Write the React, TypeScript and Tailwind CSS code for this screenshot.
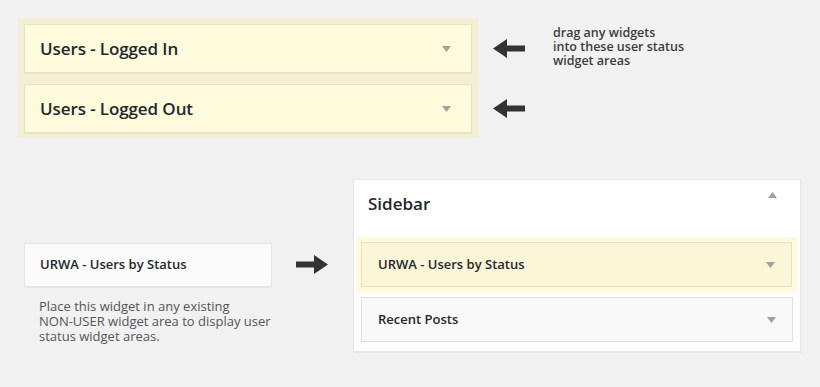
const font = { fontFamily: '"Open Sans", "Liberation Sans", sans-serif' };

function Caret({ up = false }: { up?: boolean }) {
  return (
    <svg width="9" height="6" viewBox="0 0 9 6" className="shrink-0">
      <path d={up ? 'M0 6 L4.5 0 L9 6 Z' : 'M0 0 L9 0 L4.5 6 Z'} fill="#a0a0a0" />
    </svg>
  );
}

function Arrow({ right = false }: { right?: boolean }) {
  return (
    <svg width="32" height="19" viewBox="0 0 32 19" className={right ? 'rotate-180' : ''}>
      <path d="M0 9.5 L14 0 L14 6.5 L32 6.5 L32 12.5 L14 12.5 L14 19 Z" fill="#333" />
    </svg>
  );
}

const areas = ['Users - Logged In', 'Users - Logged Out'];
const hint = ['drag any widgets', 'into these user status', 'widget areas'];
const desc = ['Place this widget in any existing', 'NON-USER widget area to display user', 'status widget areas.'];

export default function App() {
  return (
    <div className="w-[820px] h-[387px] bg-[#f1f1f1] text-[#23282d] overflow-hidden" style={font}>
      {/* user status widget areas */}
      <div className="flex items-start pt-[18px] pl-[18px]">
        <div className="w-[460px] bg-[#f3efd4] p-[6px] pb-[5px] flex flex-col gap-[11px]">
          {areas.map((a) => (
            <div
              key={a}
              className="h-[49px] bg-[#fefbdc] border border-[#e6e2c3] shadow-[0_1px_1px_rgba(0,0,0,0.04)] flex items-center justify-between pl-[15px] pr-[20px]"
            >
              <span className="text-[17px] font-semibold tracking-[-0.1px]">{a}</span>
              <Caret />
            </div>
          ))}
        </div>
        <div className="ml-[15px] pt-[6px] flex flex-col gap-[11px]">
          {areas.map((a) => (
            <div key={a} className="h-[49px] flex items-center">
              <Arrow />
            </div>
          ))}
        </div>
        <div className="ml-[28px] pt-[8px] flex flex-col text-[12.5px] font-semibold text-[#3c3c3c]">
          {hint.map((l) => (
            <span key={l} className="block h-[14px] leading-[14px] whitespace-nowrap">
              {l}
            </span>
          ))}
        </div>
      </div>

      {/* widget + sidebar */}
      <div className="flex items-start mt-[41px]">
        <div className="ml-[24px] mt-[64px] w-[248px]">
          <div className="h-[44px] bg-[#fafafa] border border-[#e5e5e5] shadow-[0_1px_1px_rgba(0,0,0,0.04)] flex items-center pl-[15px]">
            <span className="text-[13px] font-semibold">URWA - Users by Status</span>
          </div>
          <div className="mt-[12px] ml-[15px] flex flex-col text-[13px] text-[#555]">
            {desc.map((l) => (
              <span key={l} className="block h-[15px] leading-[15px] whitespace-nowrap">
                {l}
              </span>
            ))}
          </div>
        </div>
        <div className="ml-[24px] mt-[76px]">
          <Arrow right />
        </div>
        <div className="ml-[25px] w-[448px] bg-white border border-[#e5e5e5] shadow-[0_1px_1px_rgba(0,0,0,0.04)] pb-[9px]">
          <div className="h-[57px] flex items-start justify-between pl-[14px] pr-[23px] pt-[12px]">
            <span className="text-[17px] font-semibold leading-[24px]">Sidebar</span>
            <Caret up />
          </div>
          <div className="ml-[2px] mr-[3px] bg-[#fdf9dd] px-[5px] pt-[5px] pb-[6px]">
            <div className="h-[45px] bg-[#f9f5d7] border border-[#e6e2c3] flex items-center justify-between pl-[16px] pr-[16px]">
              <span className="text-[13px] font-semibold">URWA - Users by Status</span>
              <Caret />
            </div>
          </div>
          <div className="mt-[4px] mx-[7px] h-[45px] bg-[#f9f9f9] border border-[#dfdfdf] flex items-center justify-between pl-[16px] pr-[16px]">
            <span className="text-[13px] font-semibold">Recent Posts</span>
            <Caret />
          </div>
        </div>
      </div>
    </div>
  );
}
